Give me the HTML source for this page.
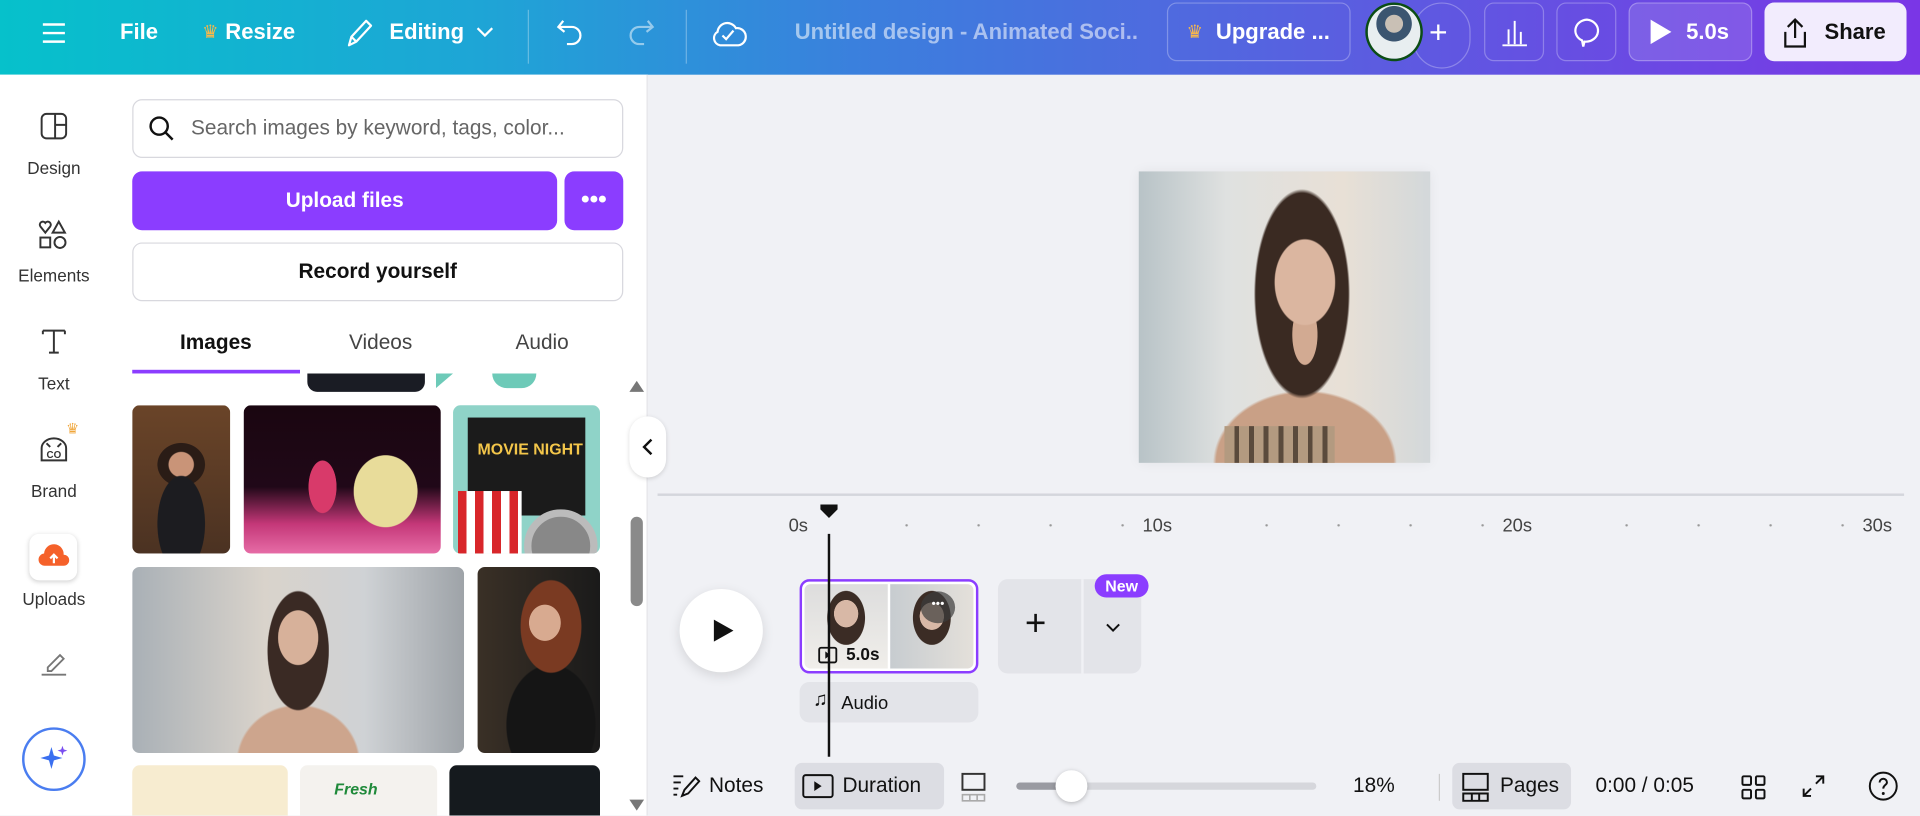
<!DOCTYPE html>
<html><head><meta charset="utf-8"><style>
*{box-sizing:border-box;margin:0;padding:0}
html,body{width:1920px;height:816px;overflow:hidden;background:#f0f1f5;font-family:"Liberation Sans",sans-serif}
#w{position:absolute;left:0;top:0;width:1568px;height:666px;transform:scale(1.22449);transform-origin:0 0;background:#f0f1f5}
.a{position:absolute}
.top{left:0;top:0;width:1568px;height:61px;background:linear-gradient(90deg,#06c1cb 0%,#1ea5d6 25%,#3b7fdd 45%,#5a5ee0 70%,#7a36e6 100%)}
.tw{color:#fff;font-weight:bold;font-size:18px}
.btn{border:1px solid rgba(255,255,255,.28);border-radius:8px}
.rail{color:#333;font-size:14px;text-align:center;width:88px;left:0}
.img{border-radius:6px;overflow:hidden}
svg{display:block}
</style></head><body><div id="w">
<div class="a top"></div>
<svg class="a" style="left:33px;top:16px" width="22" height="22" viewBox="0 0 22 22"><path d="M2 4h18M2 11h18M2 18h18" stroke="#fff" stroke-width="2"/></svg>
<div class="a tw" style="left:98px;top:16px">File</div>
<div class="a" style="left:165px;top:17px;color:#f9b84a;font-size:15px">♛</div>
<div class="a tw" style="left:184px;top:16px">Resize</div>
<svg class="a" style="left:281px;top:13px" width="26" height="28" viewBox="0 0 26 28"><path d="M4 24l2-7L18 4l4 4L10 21z M6 17l4 4" fill="none" stroke="#fff" stroke-width="1.8" stroke-linejoin="round"/></svg>
<div class="a tw" style="left:318px;top:16px">Editing</div>
<svg class="a" style="left:388px;top:19px" width="16" height="14" viewBox="0 0 16 14"><path d="M2 4l6 6 6-6" fill="none" stroke="#fff" stroke-width="1.8"/></svg>
<div class="a" style="left:431px;top:8px;width:1px;height:44px;background:rgba(255,255,255,.3)"></div>
<svg class="a" style="left:453px;top:14px" width="26" height="26" viewBox="0 0 26 26"><path d="M7 3L3 8l5 4 M3 8h11a7 7 0 010 14h-4" fill="none" stroke="#fff" stroke-width="1.8"/></svg>
<svg class="a" style="left:510px;top:14px" width="26" height="26" viewBox="0 0 26 26"><path d="M19 3l4 5-5 4 M23 8H12a7 7 0 000 14h4" fill="none" stroke="rgba(255,255,255,.5)" stroke-width="1.8"/></svg>
<div class="a" style="left:560px;top:8px;width:1px;height:44px;background:rgba(255,255,255,.3)"></div>
<svg class="a" style="left:580px;top:12px" width="30" height="30" viewBox="0 0 30 30"><path d="M8 25a6 6 0 01-2-11 8 8 0 0115-3 6 6 0 012 14z M10 17l3 3 6-7" fill="none" stroke="#fff" stroke-width="1.8"/></svg>
<div class="a tw" style="left:649px;top:16px;color:rgba(255,255,255,.55);width:280px;white-space:nowrap;overflow:hidden">Untitled design - Animated Soci...</div>
<div class="a btn" style="left:953px;top:2px;width:150px;height:48px"></div>
<div class="a" style="left:969px;top:17px;color:#f9b84a;font-size:15px">♛</div>
<div class="a tw" style="left:993px;top:16px">Upgrade ...</div>
<div class="a" style="left:1154px;top:2px;width:47px;height:54px;border:1px solid rgba(255,255,255,.28);border-radius:24px"></div>
<div class="a" style="left:1167px;top:14px;color:#fff;font-size:26px;line-height:24px">+</div>
<div class="a" style="left:1115px;top:2px;width:47px;height:48px;border-radius:50%;border:2px solid #0b4d14;background:radial-gradient(circle at 50% 35%,#c9c0b5 0 20%,#3b5570 21% 40%,#e8eef0 41%)"></div>
<div class="a btn" style="left:1212px;top:2px;width:49px;height:48px"></div>
<svg class="a" style="left:1224px;top:14px" width="26" height="26" viewBox="0 0 26 26"><path d="M3 23h20 M8 22V10 M13 22V3 M18 22V12" stroke="#fff" stroke-width="1.6"/></svg>
<div class="a btn" style="left:1271px;top:2px;width:49px;height:48px"></div>
<svg class="a" style="left:1283px;top:13px" width="26" height="28" viewBox="0 0 26 28"><path d="M13 3a10 9 0 11-2 18l-1 4-1-5A10 9 0 0113 3z" fill="none" stroke="#fff" stroke-width="1.8"/></svg>
<div class="a btn" style="left:1330px;top:2px;width:101px;height:48px;background:rgba(255,255,255,.12)"></div>
<svg class="a" style="left:1346px;top:15px" width="20" height="22" viewBox="0 0 20 22"><path d="M2 1l17 10L2 21z" fill="#fff"/></svg>
<div class="a tw" style="left:1377px;top:16px">5.0s</div>
<div class="a" style="left:1441px;top:2px;width:116px;height:48px;border-radius:8px;background:#f2ecfd"></div>
<svg class="a" style="left:1453px;top:13px" width="26" height="28" viewBox="0 0 26 28"><path d="M13 18V3 M7 9l6-6 6 6 M5 13v12h16V13" fill="none" stroke="#111" stroke-width="1.8"/></svg>
<div class="a" style="left:1490px;top:16px;font-weight:bold;font-size:18px;color:#111">Share</div>

<div class="a" style="left:0;top:61px;width:529px;height:605px;background:#fff;border-right:1px solid #e3e3e8"></div>
<svg class="a" style="left:32px;top:91px" width="24" height="24" viewBox="0 0 24 24"><rect x="2" y="2" width="20" height="20" rx="4" fill="none" stroke="#333" stroke-width="1.6"/><path d="M13 2v20 M13 11h9" stroke="#333" stroke-width="1.6"/></svg>
<div class="a rail" style="top:129px">Design</div>
<svg class="a" style="left:31px;top:179px" width="26" height="26" viewBox="0 0 26 26"><path d="M6 11L2 6a2.5 2.5 0 014-3 2.5 2.5 0 014 3z M17 2l5 9h-10z" fill="none" stroke="#333" stroke-width="1.6"/><rect x="2" y="15" width="8" height="8" fill="none" stroke="#333" stroke-width="1.6"/><circle cx="18" cy="19" r="4.5" fill="none" stroke="#333" stroke-width="1.6"/></svg>
<div class="a rail" style="top:217px">Elements</div>
<svg class="a" style="left:32px;top:267px" width="24" height="24" viewBox="0 0 24 24"><path d="M3 3h18 M3 3v3 M21 3v3 M12 3v18 M8 21h8" fill="none" stroke="#333" stroke-width="1.6"/></svg>
<div class="a rail" style="top:305px">Text</div>
<div class="a" style="left:54px;top:343px;color:#f0a63a;font-size:12px">♛</div>
<svg class="a" style="left:31px;top:354px" width="26" height="26" viewBox="0 0 26 26"><path d="M3 12a10 8 0 0120 0v10H3z M7 8l3 3 M19 8l-3 3" fill="none" stroke="#333" stroke-width="1.6"/><text x="13" y="20" font-size="8" font-family="Liberation Sans" text-anchor="middle" font-weight="bold" fill="#333">CO</text></svg>
<div class="a rail" style="top:393px">Brand</div>
<div class="a" style="left:24px;top:436px;width:39px;height:38px;border-radius:8px;background:#fff;box-shadow:0 1px 4px rgba(0,0,0,.18)"></div>
<svg class="a" style="left:31px;top:443px" width="26" height="24" viewBox="0 0 26 24"><path d="M6 19a5 5 0 01-1-10 8 8 0 0116 1 4.5 4.5 0 010 9z" fill="#f5612a"/><path d="M13 17V10 M10 13l3-3 3 3" stroke="#fff" stroke-width="1.8" fill="none"/></svg>
<div class="a rail" style="top:481px">Uploads</div>
<svg class="a" style="left:31px;top:530px" width="26" height="24" viewBox="0 0 26 24"><path d="M8 15L18 5l3 3-10 10H8z M3 21h20" fill="none" stroke="#777" stroke-width="1.5"/></svg>
<div class="a" style="left:18px;top:594px;width:52px;height:52px;border-radius:50%;border:2px solid #4a7df0;background:#fff"></div>
<svg class="a" style="left:32px;top:608px" width="24" height="24" viewBox="0 0 24 24"><path d="M10 2l2 7 7 2-7 2-2 7-2-7-7-2 7-2z" fill="#3a6ff0"/><path d="M19 1l1 3 3 1-3 1-1 3-1-3-3-1 3-1z" fill="#7a4ff0"/></svg>

<div class="a" style="left:108px;top:81px;width:401px;height:48px;border:1px solid #d8d8de;border-radius:8px"></div>
<svg class="a" style="left:120px;top:93px" width="24" height="24" viewBox="0 0 24 24"><circle cx="10" cy="10" r="7" fill="none" stroke="#111" stroke-width="2"/><path d="M15 15l6 6" stroke="#111" stroke-width="2"/></svg>
<div class="a" style="left:156px;top:95px;font-size:17px;color:#666">Search images by keyword, tags, color...</div>
<div class="a" style="left:108px;top:140px;width:347px;height:48px;border-radius:8px;background:#8b3dff;color:#fff;font-weight:bold;font-size:17px;text-align:center;line-height:48px">Upload files</div>
<div class="a" style="left:461px;top:140px;width:48px;height:48px;border-radius:8px;background:#8b3dff;color:#fff;font-weight:bold;font-size:20px;text-align:center;line-height:46px">•••</div>
<div class="a" style="left:108px;top:198px;width:401px;height:48px;border:1px solid #d8d8de;border-radius:8px;color:#111;font-weight:bold;font-size:17px;text-align:center;line-height:46px">Record yourself</div>
<div class="a" style="left:147px;top:270px;font-size:17px;color:#111;font-weight:bold">Images</div>
<div class="a" style="left:285px;top:270px;font-size:17px;color:#444">Videos</div>
<div class="a" style="left:421px;top:270px;font-size:17px;color:#444">Audio</div>
<div class="a" style="left:108px;top:302px;width:137px;height:3px;background:#8b3dff"></div>
<div class="a img" style="left:251px;top:305px;width:96px;height:15px;background:#1a1c24;border-radius:0 0 8px 8px"></div>
<div class="a" style="left:356px;top:305px;width:14px;height:12px;background:#6dcab8;clip-path:polygon(0 0,100% 0,0 100%)"></div>
<div class="a" style="left:402px;top:305px;width:36px;height:12px;background:#6dcab8;border-radius:0 0 18px 18px"></div>
<div class="a img" style="left:108px;top:331px;width:80px;height:121px;background:radial-gradient(ellipse 30% 40% at 50% 80%,#1c1c20 0 80%,transparent 82%),radial-gradient(circle at 50% 40%,#c99478 0 12%,transparent 13%),radial-gradient(ellipse 30% 18% at 50% 40%,#2a1c16 0 80%,transparent 82%),linear-gradient(#6a4428,#4b3222)"></div>
<div class="a img" style="left:199px;top:331px;width:161px;height:121px;background:radial-gradient(ellipse 10% 25% at 40% 55%,#d83a6a 0 70%,transparent 72%),radial-gradient(ellipse 20% 30% at 72% 58%,#e8dc9a 0 80%,transparent 82%),linear-gradient(#1a0610 0%,#200818 55%,#c43778 80%,#e66ca6 100%)"></div>
<div class="a img" style="left:370px;top:331px;width:120px;height:121px;background:#8fd3c8"><div class="a" style="left:12px;top:10px;width:96px;height:80px;background:#1b1b1b"></div><div class="a" style="left:20px;top:28px;color:#f3c64a;font-weight:bold;font-size:13px">MOVIE NIGHT</div><div class="a" style="left:4px;top:70px;width:52px;height:51px;background:repeating-linear-gradient(90deg,#d8262a 0 7px,#fff 7px 14px)"></div><div class="a" style="left:58px;top:85px;width:60px;height:60px;border-radius:50%;background:#888;border:6px solid #bbb"></div></div>
<div class="a img" style="left:108px;top:463px;width:271px;height:152px;background:radial-gradient(ellipse 7% 17% at 50% 38%,#d7b19a 0 85%,transparent 88%),radial-gradient(ellipse 13% 45% at 50% 45%,#3a2a24 0 70%,transparent 72%),radial-gradient(ellipse 24% 40% at 50% 105%,#cda58d 0 75%,transparent 78%),linear-gradient(90deg,#a9b0b6,#d9d3cb 40%,#cfd2d5 70%,#9ea3a8)"></div>
<div class="a img" style="left:390px;top:463px;width:100px;height:152px;background:radial-gradient(ellipse 16% 12% at 55% 30%,#d8aa90 0 80%,transparent 82%),radial-gradient(ellipse 35% 35% at 60% 32%,#7a3a22 0 70%,transparent 72%),radial-gradient(ellipse 45% 40% at 60% 85%,#151515 0 80%,transparent 82%),linear-gradient(90deg,#3a3026,#1a1a1a)"></div>
<div class="a img" style="left:108px;top:625px;width:127px;height:41px;background:#f7ecd0;border-radius:6px 6px 0 0"></div>
<div class="a img" style="left:245px;top:625px;width:112px;height:41px;background:#f4f2ee;border-radius:6px 6px 0 0"><div class="a" style="left:28px;top:12px;color:#1f8a3a;font-weight:bold;font-size:13px;font-style:italic">Fresh</div></div>
<div class="a img" style="left:367px;top:625px;width:123px;height:41px;background:#151a1e;border-radius:6px 6px 0 0"></div>
<div class="a" style="left:514px;top:311px;width:0;height:0;border-left:6px solid transparent;border-right:6px solid transparent;border-bottom:9px solid #777"></div>
<div class="a" style="left:515px;top:422px;width:10px;height:73px;border-radius:5px;background:#8a8a8a"></div>
<div class="a" style="left:514px;top:653px;width:0;height:0;border-left:6px solid transparent;border-right:6px solid transparent;border-top:9px solid #777"></div>
<div class="a" style="left:514px;top:340px;width:30px;height:50px;border-radius:15px;background:#fff;box-shadow:0 1px 4px rgba(0,0,0,.15)"></div>
<svg class="a" style="left:522px;top:357px" width="14" height="16" viewBox="0 0 14 16"><path d="M10 2L4 8l6 6" fill="none" stroke="#111" stroke-width="2"/></svg>

<div class="a" style="left:930px;top:140px;width:238px;height:238px;box-shadow:0 0 10px rgba(0,0,0,.06);background:radial-gradient(ellipse 12% 17% at 57% 38%,#dbb6a0 0 85%,transparent 88%),radial-gradient(ellipse 5% 12% at 57% 56%,#d2aa92 0 85%,transparent 88%),radial-gradient(ellipse 22% 48% at 56% 42%,#3a2a22 0 72%,transparent 75%),radial-gradient(ellipse 38% 30% at 57% 100%,#c9a086 0 80%,transparent 83%),linear-gradient(90deg,#b8c3c7,#dfe1e0 30%,#e8e0d6 70%,#d3d8da)"><div class="a" style="left:70px;top:208px;width:90px;height:30px;background:repeating-linear-gradient(90deg,#b39a80 0 8px,#5a4a3c 8px 12px)"></div></div>

<div class="a" style="left:537px;top:403px;width:1018px;height:2px;background:#d4d6dc"></div>
<div class="a" style="left:644px;top:421px;font-size:15px;color:#444">0s</div>
<div class="a" style="left:933px;top:421px;font-size:15px;color:#444">10s</div>
<div class="a" style="left:1227px;top:421px;font-size:15px;color:#444">20s</div>
<div class="a" style="left:1521px;top:421px;font-size:15px;color:#444">30s</div>
<div class="a" style="left:0;top:428px;width:1568px;height:2px;background:radial-gradient(circle,#999 0.8px,transparent 1.2px) 711px 0/58.8px 2px repeat-x;clip-path:inset(0 640px 0 711px)"></div>
<div class="a" style="left:0;top:428px;width:1568px;height:2px;background:radial-gradient(circle,#999 0.8px,transparent 1.2px) 1005px 0/58.8px 2px repeat-x;clip-path:inset(0 346px 0 1005px)"></div>
<div class="a" style="left:0;top:428px;width:1568px;height:2px;background:radial-gradient(circle,#999 0.8px,transparent 1.2px) 1299px 0/58.8px 2px repeat-x;clip-path:inset(0 52px 0 1299px)"></div>
<div class="a" style="left:555px;top:481px;width:68px;height:68px;border-radius:50%;background:#fff;box-shadow:0 3px 10px rgba(0,0,0,.12)"></div>
<svg class="a" style="left:581px;top:504px" width="20" height="22" viewBox="0 0 20 22"><path d="M2 2l16 9-16 9z" fill="#111"/></svg>
<div class="a" style="left:653px;top:473px;width:146px;height:77px;border:2px solid #8b3dff;border-radius:8px;background:#fff;padding:2px"><div style="display:flex;gap:2px;height:100%;border-radius:5px;overflow:hidden"><div style="flex:1;background:radial-gradient(ellipse 18% 20% at 50% 35%,#d8b8a6 0 80%,transparent 82%),radial-gradient(ellipse 32% 45% at 50% 40%,#3b2c25 0 70%,transparent 72%),linear-gradient(#ddd,#f0eeea)"></div><div style="flex:1;background:radial-gradient(ellipse 18% 20% at 50% 38%,#d8b8a6 0 80%,transparent 82%),radial-gradient(ellipse 32% 45% at 50% 40%,#3b2c25 0 70%,transparent 72%),linear-gradient(90deg,#c7ccd0,#e4e0da)"></div></div></div>
<div class="a" style="left:752px;top:483px;width:28px;height:26px;border-radius:50%;background:rgba(60,60,60,.7);color:#fff;font-size:10px;text-align:center;line-height:22px">•••</div>
<svg class="a" style="left:668px;top:528px" width="16" height="14" viewBox="0 0 16 14"><rect x="1" y="1" width="14" height="12" rx="1.5" fill="none" stroke="#111" stroke-width="1.5"/><path d="M6 4l4 3-4 3z" fill="#111"/></svg>
<div class="a" style="left:691px;top:526px;font-size:14px;color:#111;font-weight:bold">5.0s</div>
<div class="a" style="left:815px;top:473px;width:117px;height:77px;border-radius:8px;background:#e3e4e9"></div>
<div class="a" style="left:883px;top:473px;width:2px;height:77px;background:#f0f1f5"></div>
<div class="a" style="left:837px;top:495px;font-size:30px;color:#111;line-height:30px;font-weight:300">+</div>
<svg class="a" style="left:901px;top:507px" width="16" height="12" viewBox="0 0 16 12"><path d="M3 3l5 5 5-5" fill="none" stroke="#111" stroke-width="1.6"/></svg>
<div class="a" style="left:894px;top:469px;width:44px;height:19px;border-radius:10px;background:#8b3dff;color:#fff;font-size:13px;font-weight:bold;text-align:center;line-height:19px">New</div>
<div class="a" style="left:653px;top:557px;width:146px;height:33px;border-radius:8px;background:#e3e4e9"></div>
<div class="a" style="left:664px;top:563px;font-size:16px;color:#111">♫</div>
<div class="a" style="left:687px;top:566px;font-size:15px;color:#111">Audio</div>
<div class="a" style="left:676px;top:436px;width:2px;height:182px;background:#111"></div>
<svg class="a" style="left:668px;top:410px" width="18" height="14" viewBox="0 0 18 14"><path d="M2 2h14v4l-7 7-7-7z" fill="#111"/></svg>

<svg class="a" style="left:548px;top:631px" width="24" height="22" viewBox="0 0 24 22"><path d="M2 3h8 M2 8h6 M2 13h4 M2 18h3 M9 19l2-5 9-10 3 3-9 10z" fill="none" stroke="#111" stroke-width="1.6"/></svg>
<div class="a" style="left:579px;top:632px;font-size:17px;color:#111">Notes</div>
<div class="a" style="left:649px;top:623px;width:122px;height:38px;border-radius:6px;background:#dcdde3"></div>
<svg class="a" style="left:655px;top:632px" width="26" height="20" viewBox="0 0 26 20"><rect x="1" y="1" width="24" height="18" rx="2" fill="none" stroke="#111" stroke-width="1.6"/><path d="M10 6l6 4-6 4z" fill="#111"/></svg>
<div class="a" style="left:688px;top:632px;font-size:17px;color:#111">Duration</div>
<svg class="a" style="left:784px;top:630px" width="24" height="26" viewBox="0 0 24 26"><rect x="2" y="2" width="18" height="13" fill="none" stroke="#333" stroke-width="1.6"/><path d="M2 19h18v5H2z M8 19v5 M14 19v5" fill="none" stroke="#aaa" stroke-width="1.3"/></svg>
<div class="a" style="left:830px;top:639px;width:245px;height:6px;border-radius:3px;background:#d6d7dc"></div>
<div class="a" style="left:830px;top:639px;width:45px;height:6px;border-radius:3px;background:#9a9ba2"></div>
<div class="a" style="left:862px;top:629px;width:26px;height:26px;border-radius:50%;background:#fff;box-shadow:0 1px 4px rgba(0,0,0,.25)"></div>
<div class="a" style="left:1105px;top:632px;font-size:17px;color:#111">18%</div>
<div class="a" style="left:1175px;top:632px;width:1px;height:22px;background:#ccc"></div>
<div class="a" style="left:1186px;top:623px;width:97px;height:38px;border-radius:6px;background:#dcdde3"></div>
<svg class="a" style="left:1193px;top:630px" width="24" height="26" viewBox="0 0 24 26"><rect x="2" y="2" width="20" height="13" fill="none" stroke="#111" stroke-width="1.6"/><path d="M2 18h20v6H2z M9 18v6 M15 18v6" fill="none" stroke="#111" stroke-width="1.6"/></svg>
<div class="a" style="left:1225px;top:632px;font-size:17px;color:#111">Pages</div>
<div class="a" style="left:1303px;top:632px;font-size:17px;color:#111">0:00 / 0:05</div>
<svg class="a" style="left:1421px;top:632px" width="22" height="22" viewBox="0 0 22 22"><g fill="none" stroke="#111" stroke-width="1.6"><rect x="2" y="2" width="7" height="7" rx="1"/><rect x="13" y="2" width="7" height="7" rx="1"/><rect x="2" y="13" width="7" height="7" rx="1"/><rect x="13" y="13" width="7" height="7" rx="1"/></g></svg>
<svg class="a" style="left:1470px;top:631px" width="22" height="22" viewBox="0 0 22 22"><path d="M13 3h6v6 M19 3l-6 6 M9 19H3v-6 M3 19l6-6" fill="none" stroke="#111" stroke-width="1.6"/></svg>
<svg class="a" style="left:1525px;top:629px" width="26" height="26" viewBox="0 0 26 26"><circle cx="13" cy="13" r="11" fill="none" stroke="#111" stroke-width="1.6"/><path d="M10 10a3 3 0 116 0c0 2-3 2-3 5" fill="none" stroke="#111" stroke-width="1.6"/><circle cx="13" cy="19" r="1.2" fill="#111"/></svg>
</div></body></html>
